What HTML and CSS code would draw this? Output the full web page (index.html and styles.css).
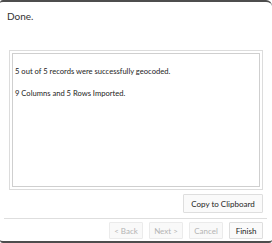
FILE: index.html
```html
<!DOCTYPE html>
<html lang="en">
<head>
    <meta charset="UTF-8" />
    <title>Geocode Wizard</title>
    <link rel="stylesheet" href="styles.css">
</head>
<body>
    <div class="window">
        <div class="title">Done.</div>
        <div class="result">
            <div class="result-inner">
                <p>5 out of 5 records were successfully geocoded.</p>
                <p>9 Columns and 5 Rows Imported.</p>
            </div>
        </div>
        <div class="copy-row">
            <button class="btn copy">Copy to Clipboard</button>
        </div>
        <div class="footer">
            <button class="btn nav" disabled>&lt; Back</button>
            <button class="btn nav" disabled>Next &gt;</button>
            <button class="btn nav" disabled>Cancel</button>
            <button class="btn nav">Finish</button>
        </div>
    </div>
</body>
</html>
```

FILE: styles.css
```css
*{
    margin:0;
    padding:0;
    box-sizing:border-box;
}
body{
    width:272px;
    height:243px;
    background:#fff;
    font-family:Lato, "Noto Sans", sans-serif;
    font-size:7.5px;
    color:#1c1c1c;
    overflow:hidden;
}
.window{
    height:243px;
    border-top:2px solid #4d4d4d;
    border-bottom:2px solid #4d4d4d;
    border-radius:3px 6px 3px 3px;
    display:flex;
    flex-direction:column;
}
.title{
    padding:8px 0 0 7px;
    font-size:10px;
    color:#333;
    height:48px;
}
.result{
    margin-left:9px;
    width:254px;
    height:140px;
    border:1px solid #dcdcdc;
    padding:2px;
}
.result-inner{
    height:100%;
    border:1px solid #cfcfcf;
    padding:6px 2px;
}
.result-inner p{
    font-size:7.6px;
    line-height:22px;
}
.copy-row{
    display:flex;
    justify-content:flex-end;
    padding:4px 9px 0 0;
}
.btn{
    font-family:inherit;
    font-size:8px;
    color:#1c1c1c;
    background:#fafafa;
    border:1px solid #dedede;
    border-radius:1px;
}
.copy{
    width:80px;
    height:19px;
}
.footer{
    margin:5px 5px 0 4px;
    border-top:1px solid #dedede;
    padding-top:3px;
    display:flex;
    justify-content:flex-end;
    gap:6px;
    padding-right:4px;
}
.nav{
    width:34px;
    height:17px;
}
.nav:disabled{
    color:#b4b4b4;
    border-color:#ebebeb;
    background:#f9f9f9;
}
```
